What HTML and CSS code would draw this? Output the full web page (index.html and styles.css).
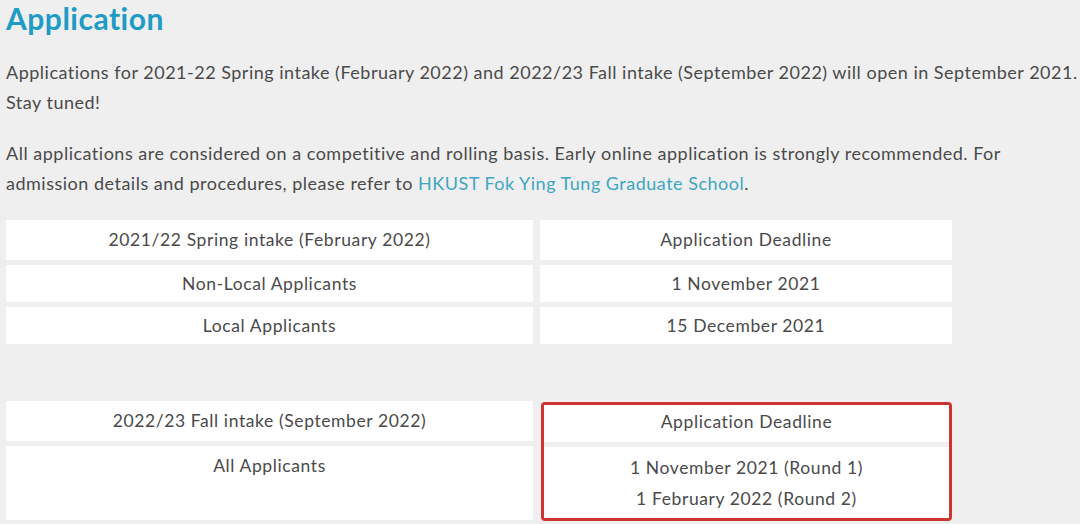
FILE: index.html
```html
<!DOCTYPE html>
<html>
<head>
<meta charset="utf-8">
<link rel="stylesheet" href="styles.css">
</head>
<body>
<main class="page">
  <h1 class="title">Application</h1>
  <p class="para">Applications for 2021-22 Spring intake (February 2022) and 2022/23 Fall intake (September 2022) will open in September 2021. Stay tuned!</p>
  <p class="para">All applications are considered on a competitive and rolling basis. Early online application is strongly recommended. For<br>admission details and procedures, please refer to <a class="link" href="#">HKUST Fok Ying Tung Graduate School</a>.</p>

  <section class="table table-spring">
    <div class="col col-left">
      <div class="cell row-head">2021/22 Spring intake (February 2022)</div>
      <div class="cell row-body">Non-Local Applicants</div>
      <div class="cell row-body">Local Applicants</div>
    </div>
    <div class="col col-right">
      <div class="cell row-head">Application Deadline</div>
      <div class="cell row-body">1 November 2021</div>
      <div class="cell row-body">15 December 2021</div>
    </div>
  </section>

  <section class="table table-fall">
    <div class="col col-left">
      <div class="cell row-head">2022/23 Fall intake (September 2022)</div>
      <div class="cell row-tall">All Applicants</div>
    </div>
    <div class="col col-right highlight">
      <div class="cell row-head">Application Deadline</div>
      <div class="cell row-tall">1 November 2021 (Round 1)<br>1 February 2022 (Round 2)</div>
    </div>
  </section>
</main>
</body>
</html>
```

FILE: styles.css
```css
html, body {
  margin: 0;
  padding: 0;
  background: #efefef;
}
body {
  font-family: Lato, "Open Sans", sans-serif;
  color: #4a4a4a;
  width: 1080px;
  height: 524px;
  overflow: hidden;
}
.page {
  padding: 0 0 0 6px;
}
.title {
  margin: 0;
  font-size: 30px;
  line-height: 36px;
  font-weight: 700;
  letter-spacing: 0.5px;
  color: #1e9bc6;
}
.para {
  width: 1074px;
  margin: 0 0 20px 0;
  font-size: 18px;
  letter-spacing: 0.5px;
  line-height: 30px;
}
.title + .para {
  margin-top: 21px;
}
.para + .para {
  margin-top: 21px;
}
.link {
  color: #3ea6c4;
  text-decoration: none;
}
.table {
  display: flex;
  gap: 7px;
  align-items: flex-start;
}
.table-spring {
  margin-top: 22px;
}
.table-fall {
  margin-top: 57px;
}
.col {
  display: flex;
  flex-direction: column;
  gap: 5px;
}
.col-left {
  width: 527px;
}
.col-right {
  width: 412px;
}
.cell {
  background: #ffffff;
  text-align: center;
  font-size: 17.5px;
  letter-spacing: 0.6px;
  box-sizing: border-box;
}
.row-head {
  height: 40px;
  line-height: 40px;
}
.row-body {
  height: 37px;
  line-height: 38px;
}
.row-tall {
  height: 74px;
  line-height: 31px;
  padding-top: 4px;
}
.highlight {
  border: 3px solid #cf3530;
  border-radius: 4px;
  margin-left: 1px;
  margin-top: 1px;
  width: 411px;
  box-sizing: border-box;
  gap: 5px;
  background: #efefef;
}
.highlight .row-head {
  height: 37px;
  line-height: 34px;
}
.highlight .row-tall {
  height: 71px;
  padding-top: 5px;
}
```
